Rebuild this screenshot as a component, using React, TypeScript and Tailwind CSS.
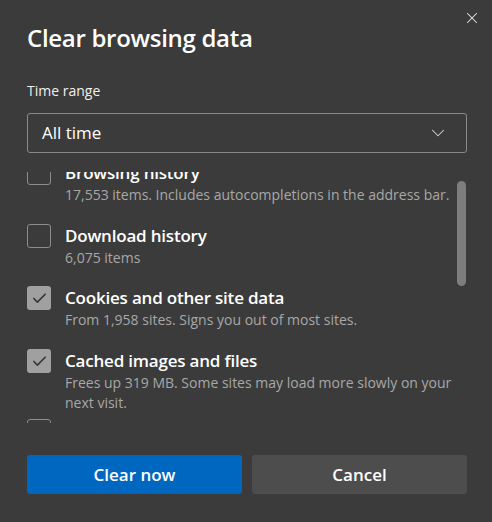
import { Check, ChevronDown, X } from 'lucide-react';

type Item = { title: string; desc: string[]; checked: boolean; gap: string };

const ITEMS: Item[] = [
  { title: 'Browsing history', desc: ['17,553 items. Includes autocompletions in the address bar.'], checked: false, gap: 'mb-[19px]' },
  { title: 'Download history', desc: ['6,075 items'], checked: false, gap: 'mb-[18px]' },
  { title: 'Cookies and other site data', desc: ['From 1,958 sites. Signs you out of most sites.'], checked: true, gap: 'mb-[19px]' },
  { title: 'Cached images and files', desc: ['Frees up 319 MB. Some sites may load more slowly on your', 'next visit.'], checked: true, gap: 'mb-[6px]' },
  { title: 'Passwords', desc: ['3 passwords'], checked: false, gap: 'mb-0' },
];

function Checkbox({ checked }: { checked: boolean }) {
  if (checked) {
    return (
      <div className="flex h-6 w-6 shrink-0 items-center justify-center rounded-[3px] bg-[#a0a0a0]">
        <Check size={17} strokeWidth={2.4} className="text-[#383838]" />
      </div>
    );
  }
  return <div className="h-6 w-6 shrink-0 rounded-[3px] border border-[#8c8c8c]" />;
}

export default function App() {
  return (
    <div
      className="relative h-[522px] w-[492px] overflow-hidden bg-[#3b3b3b] text-white"
      style={{ fontFamily: '"Open Sans", "Noto Sans", sans-serif' }}
    >
      <button className="absolute right-[11px] top-[9px] text-[#e8e8e8]">
        <X size={18} strokeWidth={1.4} />
      </button>

      <div className="pl-[27px] pr-[25px] pt-[22px]">
        <h1 className="text-[24px] font-semibold leading-[32px] tracking-[-0.3px]">Clear browsing data</h1>

        <p className="mt-[27px] text-[14px] leading-[20px] text-[#f0f0f0]">Time range</p>

        <div className="mt-[12px] flex h-[40px] items-center justify-between rounded-[3px] border border-[#8a8a8a] pl-[14px] pr-[17px]">
          <span className="text-[17px]">All time</span>
          <ChevronDown size={22} strokeWidth={1.1} className="text-[#d8d8d8]" />
        </div>
      </div>

      {/* scrolled list */}
      <div className="relative mt-[19px] h-[251px] overflow-hidden pl-[27px] pr-[25px]">
        <div className="-mt-[11px]">
          {ITEMS.map((item) => (
            <div key={item.title} className={`flex gap-[14px] ${item.gap}`}>
              <Checkbox checked={item.checked} />
              <div>
                <p className="text-[17px] font-semibold leading-[24px] tracking-[-0.2px]">{item.title}</p>
                {item.desc.map((line) => (
                  <p key={line} className="whitespace-nowrap text-[14px] leading-[20px] text-[#a8a8a8]">
                    {line}
                  </p>
                ))}
              </div>
            </div>
          ))}
        </div>
        <div className="absolute right-[26px] top-[9px] h-[105px] w-[9px] rounded-full bg-[#7d7d7d]" />
      </div>

      <div className="mt-[32px] flex gap-[10px] pl-[27px] pr-[25px]">
        <button className="h-[39px] flex-1 rounded-[3px] bg-[#0067c0] text-[17px] font-semibold">Clear now</button>
        <button className="h-[39px] flex-1 rounded-[3px] bg-[#4d4d4d] text-[17px] font-semibold">Cancel</button>
      </div>
    </div>
  );
}
